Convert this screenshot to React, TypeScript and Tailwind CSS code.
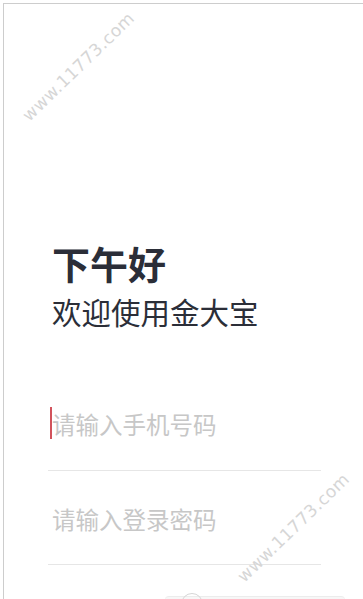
export default function App() {
    return (
        <div
            className="relative h-[599px] w-[363px] overflow-hidden bg-white pl-[3px] pt-[3px]"
            style={{ fontFamily: '"Noto Sans CJK SC", "Noto Sans", sans-serif' }}
        >
            <div className="h-full border-l border-t border-[#cdcdcd]">
                <div className="pl-[44px] pr-[42px] pt-[240px]">
                    <h1 className="pl-[4px] text-[38px] font-bold leading-[38px] text-[#2b2e38]">下午好</h1>
                    <p className="mt-[14px] pl-[4px] text-[29.5px] leading-[30px] text-[#2b2e38]">欢迎使用金大宝</p>

                    <div className="mt-[51px]">
                        <div className="relative flex h-[94px] items-center border-b border-[#e6e6e6] pl-[4px]">
                            <span className="absolute left-[2px] top-[30px] h-[32px] w-[2px] bg-[#d2535c]" />
                            <span className="text-[23.5px] leading-[24px] text-[#c7c7c7]">请输入手机号码</span>
                        </div>
                        <div className="flex h-[94px] items-center border-b border-[#e6e6e6] pl-[4px] pt-[2px]">
                            <span className="text-[23.5px] leading-[24px] text-[#c7c7c7]">请输入登录密码</span>
                        </div>
                    </div>
                </div>

                <div className="relative ml-[161px] mr-[18px] mt-[31px] h-[20px] rounded-t-[4px] border-t border-[#ececec] bg-[#f7f7f7]">
                    <span className="absolute left-[16px] top-[-4px] h-[22px] w-[22px] rounded-full border border-[#d6d6d6]" />
                </div>
            </div>

            <span
                className="pointer-events-none absolute left-[6px] top-[57px] w-[140px] -rotate-[44deg] text-center text-[17px] tracking-[0.5px] text-[#d6d6d6]"
                style={{ fontFamily: '"DejaVu Sans", sans-serif' }}
            >
                www.11773.com
            </span>
            <span
                className="pointer-events-none absolute left-[221px] top-[518px] w-[140px] -rotate-[44deg] text-center text-[17px] tracking-[0.5px] text-[#d6d6d6]"
                style={{ fontFamily: '"DejaVu Sans", sans-serif' }}
            >
                www.11773.com
            </span>
        </div>
    );
}
